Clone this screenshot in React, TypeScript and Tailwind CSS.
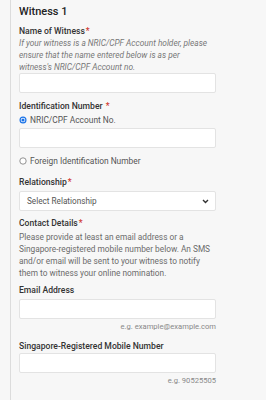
import React from 'react';

const Req = () => <span className="text-[#d0342c] ml-[1px]">*</span>;

const Label = ({ children, className = '' }: { children: React.ReactNode; className?: string }) => (
  <p className={`text-[8.6px] font-medium text-[#333] leading-[12px] ${className}`}>{children}</p>
);

const Field = ({ className = '' }: { className?: string }) => (
  <div className={`h-[20px] w-[197px] bg-white border border-[#e3e3e3] rounded-[2px] ${className}`} />
);

const Radio = ({ checked, label, className = '' }: { checked?: boolean; label: string; className?: string }) => (
  <div className={`flex items-center gap-[3px] text-[8.4px] text-[#555] leading-[12px] ${className}`}>
    <svg width="8" height="8" viewBox="0 0 8 8">
      {checked ? (
        <>
          <circle cx="4" cy="4" r="3.5" fill="#1a73e8" />
          <circle cx="4" cy="4" r="2.3" fill="#ffffff" />
          <circle cx="4" cy="4" r="1.6" fill="#1a73e8" />
        </>
      ) : (
        <circle cx="4" cy="4" r="3.2" fill="#fff" stroke="#777" strokeWidth="0.8" />
      )}
    </svg>
    <span>{label}</span>
  </div>
);

export default function App() {
  return (
    <div className="w-[266px] h-[400px] bg-[#f7f7f7] pl-[10px] overflow-hidden" style={{ fontFamily: 'Roboto, "Liberation Sans", sans-serif' }}>
      <div className="h-full border-l border-[#dcdcdc] pl-[8px] pt-[4px]">
        <h2 className="text-[11px] font-medium text-[#222] leading-[16px]">Witness 1</h2>

        <Label className="mt-[5px]">Name of Witness<Req /></Label>
        <p className="text-[8.3px] italic text-[#777] leading-[12px] whitespace-nowrap">
          If your witness is a NRIC/CPF Account holder, please<br />
          ensure that the name entered below is as per<br />
          witness's NRIC/CPF Account no.
        </p>
        <Field />

        <Label className="mt-[7px]">Identification Number <Req /></Label>
        <Radio checked label="NRIC/CPF Account No." className="mt-[2px]" />
        <Field className="mt-[2px]" />
        <Radio label="Foreign Identification Number" className="mt-[7px]" />

        <Label className="mt-[9px]">Relationship<Req /></Label>
        <div className="mt-[3px] h-[20px] w-[197px] bg-white border border-[#e3e3e3] rounded-[2px] flex items-center justify-between pl-[7px] pr-[6px]">
          <span className="text-[8.2px] text-[#555]">Select Relationship</span>
          <svg width="7" height="5" viewBox="0 0 7 5" fill="none">
            <path d="M1 1 L3.5 3.5 L6 1" stroke="#333" strokeWidth="1.4" />
          </svg>
        </div>

        <Label className="mt-[6px]">Contact Details<Req /></Label>
        <p className="mt-[2px] text-[8.3px] text-[#6b6b6b] leading-[12px] whitespace-nowrap">
          Please provide at least an email address or a<br />
          Singapore-registered mobile number below. An SMS<br />
          and/or email will be sent to your witness to notify<br />
          them to witness your online nomination.
        </p>

        <div className="w-[197px]">
          <Label className="mt-[5px]">Email Address</Label>
          <Field className="mt-[3px]" />
          <p className="mt-[3px] text-right text-[7.6px] text-[#888] leading-[10px]">e.g. example@example.com</p>

          <Label className="mt-[8px]">Singapore-Registered Mobile Number</Label>
          <Field className="mt-[1px]" />
          <p className="mt-[3px] text-right text-[7.6px] text-[#888] leading-[10px]">e.g. 90525505</p>
        </div>
      </div>
    </div>
  );
}
